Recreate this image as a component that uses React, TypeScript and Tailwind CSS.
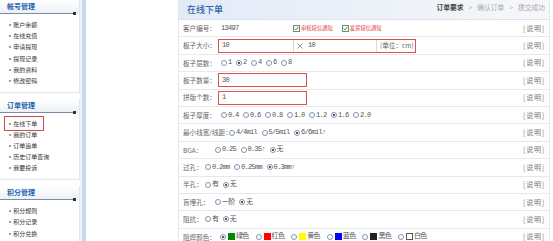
import React from 'react';

const menus = [
  { title: '帐号管理', items: ['账户余额', '在线充值', '申请提现', '提现记录', '我的资料', '修改密码'] },
  { title: '订单管理', items: ['在线下单', '我的订单', '订单追单', '历史订单查询', '我要投诉'] },
  { title: '积分管理', items: ['积分规则', '积分记录', '积分兑换'] },
];

const mono = "font-['Liberation_Mono','Noto_Sans_CJK_SC',monospace] text-[7px] tracking-[-0.7px]";

function Radio({ on }: { on?: boolean }) {
  return (
    <span className="w-[6px] h-[6px] rounded-full border border-[#7f95b3] bg-white flex items-center justify-center shrink-0">
      {on && <span className="w-[2px] h-[2px] rounded-full bg-[#222]" />}
    </span>
  );
}

function Check() {
  return (
    <svg width="7" height="7" viewBox="0 0 7 7" className="shrink-0">
      <rect x="0.5" y="0.5" width="6" height="6" fill="#fff" stroke="#6f8a75" />
      <path d="M1.6 3.6 L2.9 4.9 L5.4 1.9" fill="none" stroke="#1f9a2a" strokeWidth="1" />
    </svg>
  );
}

interface Opt {
  text: string;
  on?: boolean;
  color?: string;
}

function Options({ opts, gap = 'gap-[4.5px]' }: { opts: Opt[]; gap?: string }) {
  return (
    <div className={`flex items-center ${gap}`}>
      {opts.map((o) => (
        <span key={o.text} className="flex items-center gap-[1px]">
          <Radio on={o.on} />
          {o.color && (
            <span className={`w-[7px] h-[7px] ml-[1px] ${o.color}`} />
          )}
          <span className={`${mono} text-[#555]`}>{o.text}</span>
        </span>
      ))}
    </div>
  );
}

function Row({ label, w, children }: { label: string; w: string; children?: React.ReactNode }) {
  return (
    <div className="h-[17.4px] shrink-0 flex items-center border-b border-[#e6e8eb] pl-[4px] pr-[4px]">
      <span className={`${w} shrink-0 whitespace-nowrap text-[6.6px] text-[#666]`}>{label}</span>
      {children}
      <span className="ml-auto text-[7px] tracking-[0.8px] text-[#777]">[说明]</span>
    </div>
  );
}

export default function App() {
  return (
    <div className="flex w-[553px] h-[241px] overflow-hidden bg-white font-['Noto_Sans_CJK_SC','Noto_Sans',sans-serif] leading-none">
      {/* Sidebar */}
      <aside className="w-[80px] shrink-0 flex flex-col gap-[6px]">
        {menus.map((m) => (
          <div key={m.title} className="flex flex-col border-r border-b border-[#e3e7ed] pb-[5px]">
            <div className="h-[14px] flex flex-col bg-linear-to-b from-white to-[#ecf0f4]">
              <div className="flex-1 flex items-center pl-[7px] text-[7px] font-bold text-[#1e62b0]">{m.title}</div>
              <div className="flex items-center h-[1px]">
                <div className="flex-1 h-[1px] bg-[#7d8ca0]" />
                <div className="w-[3px] h-[3px] bg-[#333] mr-[3px]" />
              </div>
            </div>
            <div className="pt-[5.5px] flex flex-col">
              {m.items.map((it) => {
                const active = it === '在线下单';
                return (
                  <div key={it} className="h-[11.2px] flex items-center pl-[9px]">
                    <span
                      className={`flex items-center gap-[2.3px] h-full ${
                        active ? '-ml-[3px] pl-[3px] pr-[5px] outline outline-1 outline-[#d04848] outline-offset-[1px]' : ''
                      }`}
                    >
                      <span className="w-[2px] h-[2px] bg-[#9aa0a8]" />
                      <span className="text-[6px] text-[#333]">{it}</span>
                    </span>
                  </div>
                );
              })}
            </div>
          </div>
        ))}
      </aside>

      {/* Divider bar */}
      <div className="w-[2px] shrink-0 bg-[#eef2f8]" />
      <div className="w-[4px] shrink-0 bg-[#c7d8f3]" />

      {/* Main */}
      <main className="ml-[92px] w-[372px] shrink-0 flex flex-col border-l border-r border-[#e3e6ea]">
        <div className="h-[20px] shrink-0 flex justify-between border-b border-[#dde2e8] bg-linear-to-r from-[#e2ebf8] to-[#f6f7f9] pl-[8px] pr-[4px]">
          <span className="self-center text-[9px] font-medium text-[#2f63aa]">在线下单</span>
          <div className="mt-[4px] flex gap-[5px] text-[6.75px] text-[#aaa]">
            <span className="font-bold text-[#444]">订单要求</span>
            <span>&gt;</span>
            <span>确认订单</span>
            <span>&gt;</span>
            <span>提交成功</span>
          </div>
        </div>

        <Row label="客户编号：" w="w-[38px]">
          <span className={`${mono} text-[#555]`}>13497</span>
          <span className="ml-[54.5px] flex items-center gap-[1px]">
            <Check />
            <span className="text-[5.3px] text-[#e03434]">审核短信通知</span>
          </span>
          <span className="ml-[9px] flex items-center gap-[1px]">
            <Check />
            <span className="text-[5.3px] text-[#e03434]">发货短信通知</span>
          </span>
        </Row>

        <Row label="板子大小：" w="w-[35px]">
          <div className="w-[198px] h-[14px] flex items-stretch border border-[#d9534f] bg-white">
            <span className={`w-[74px] flex items-center pl-[3px] ${mono} text-[#555]`}>10</span>
            <span className="w-[1px] bg-[#d6d6d6]" />
            <span className="w-[82px] flex items-center pl-[3px] gap-[5px]">
              <svg width="6" height="6" viewBox="0 0 6 6">
                <path d="M0.5 0.5 L5.5 5.5 M5.5 0.5 L0.5 5.5" stroke="#777" strokeWidth="0.8" />
              </svg>
              <span className={`${mono} text-[#555]`}>10</span>
            </span>
            <span className="w-[1px] bg-[#d6d6d6]" />
            <span className="flex-1 flex items-center pl-[3px] text-[6.6px] text-[#666]">(单位：cm)</span>
          </div>
        </Row>

        <Row label="板子层数：" w="w-[38px]">
          <Options opts={[{ text: '1' }, { text: '2', on: true }, { text: '4' }, { text: '6' }, { text: '8' }]} />
        </Row>

        <Row label="板子数量：" w="w-[35px]">
          <div className={`w-[89px] h-[14px] flex items-center border border-[#d9534f] pl-[3px] ${mono} text-[#555]`}>30</div>
        </Row>

        <Row label="拼版个数：" w="w-[35px]">
          <div className={`w-[89px] h-[14px] flex items-center border border-[#d9534f] pl-[3px] ${mono} text-[#555]`}>1</div>
        </Row>

        <Row label="板子厚度：" w="w-[38px]">
          <Options
            opts={[
              { text: '0.4' },
              { text: '0.6' },
              { text: '0.8' },
              { text: '1.0' },
              { text: '1.2' },
              { text: '1.6', on: true },
              { text: '2.0' },
            ]}
          />
        </Row>

        <Row label="最小线宽/线距：" w="w-[46px]">
          <Options opts={[{ text: '4/4mil' }, { text: '5/5mil' }, { text: '6/6mil↑', on: true }]} />
        </Row>

        <Row label="BGA：" w="w-[32px]">
          <Options opts={[{ text: '0.25' }, { text: '0.35↑' }, { text: '无', on: true }]} />
        </Row>

        <Row label="过孔：" w="w-[22px]">
          <Options opts={[{ text: '0.2mm' }, { text: '0.25mm' }, { text: '0.3mm↑', on: true }]} />
        </Row>

        <Row label="半孔：" w="w-[22px]">
          <Options opts={[{ text: '有' }, { text: '无', on: true }]} />
        </Row>

        <Row label="盲埋孔：" w="w-[32px]">
          <Options opts={[{ text: '一阶' }, { text: '无', on: true }]} />
        </Row>

        <Row label="阻抗：" w="w-[22px]">
          <Options opts={[{ text: '有' }, { text: '无', on: true }]} />
        </Row>

        <Row label="阻焊颜色：" w="w-[37px]">
          <Options
            gap="gap-[7px]"
            opts={[
              { text: '绿色', on: true, color: 'bg-[#008a00]' },
              { text: '红色', color: 'bg-[#ff0000]' },
              { text: '黄色', color: 'bg-[#ffff00]' },
              { text: '蓝色', color: 'bg-[#0000ff]' },
              { text: '黑色', color: 'bg-[#222]' },
              { text: '白色', color: 'bg-white border border-[#555]' },
            ]}
          />
        </Row>
      </main>
    </div>
  );
}
